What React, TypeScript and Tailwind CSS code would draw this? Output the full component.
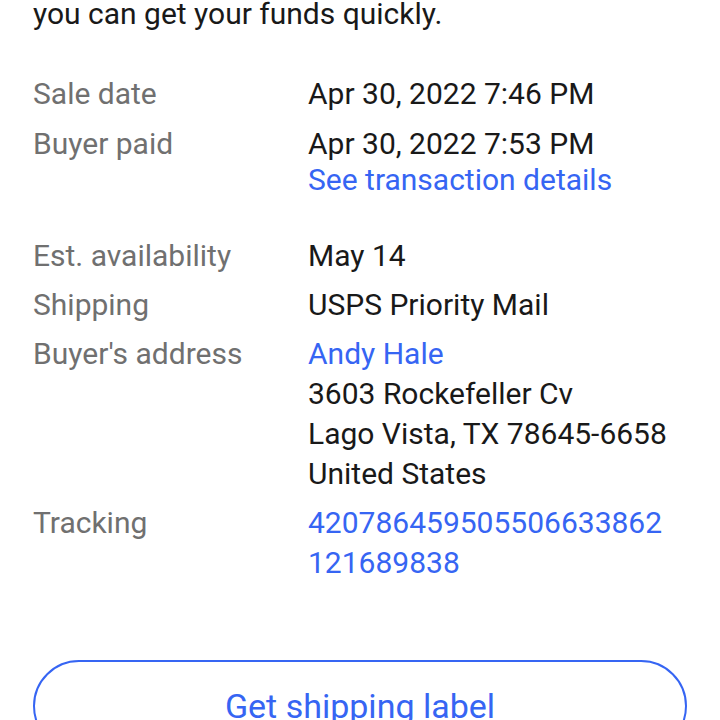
export default function App() {
  const font = { fontFamily: "Roboto, 'Noto Sans', sans-serif" }

  return (
    <div className="w-[720px] h-[720px] overflow-hidden bg-white" style={font}>
      <div className="-mt-[46px] px-[33px] text-[30px] leading-[40px] text-[#191919]">
        {/* Intro text (first line scrolled off) */}
        <p>
          Ship your item and upload tracking so
          <br />
          you can get your funds quickly.
        </p>

        {/* Payment rows */}
        <div className="mt-10 flex flex-col gap-[10px]">
          <div className="grid grid-cols-[275px_1fr]">
            <div className="text-[#707070]">Sale date</div>
            <div>Apr 30, 2022 7:46 PM</div>
          </div>
          <div className="grid grid-cols-[275px_1fr]">
            <div className="text-[#707070]">Buyer paid</div>
            <div>
              <div>Apr 30, 2022 7:53 PM</div>
              <a href="#" className="block leading-[32px] text-[#3665f3]">
                See transaction details
              </a>
            </div>
          </div>
        </div>

        {/* Shipping rows */}
        <div className="mt-10 flex flex-col gap-[9px]">
          <div className="grid grid-cols-[275px_1fr]">
            <div className="text-[#707070]">Est. availability</div>
            <div>May 14</div>
          </div>
          <div className="grid grid-cols-[275px_1fr]">
            <div className="text-[#707070]">Shipping</div>
            <div>USPS Priority Mail</div>
          </div>
          <div className="grid grid-cols-[275px_1fr]">
            <div className="text-[#707070]">Buyer's address</div>
            <div>
              <a href="#" className="block text-[#3665f3]">
                Andy Hale
              </a>
              <div>3603 Rockefeller Cv</div>
              <div>Lago Vista, TX 78645-6658</div>
              <div>United States</div>
            </div>
          </div>
          <div className="grid grid-cols-[275px_1fr]">
            <div className="text-[#707070]">Tracking</div>
            <a href="#" className="block text-[#3665f3]">
              420786459505506633862
              <br />
              121689838
            </a>
          </div>
        </div>

        <button className="mt-[77px] w-full h-[92px] rounded-full border-2 border-[#3665f3] text-[#3665f3] text-[34px] leading-[40px]">
          Get shipping label
        </button>
      </div>
    </div>
  )
}
